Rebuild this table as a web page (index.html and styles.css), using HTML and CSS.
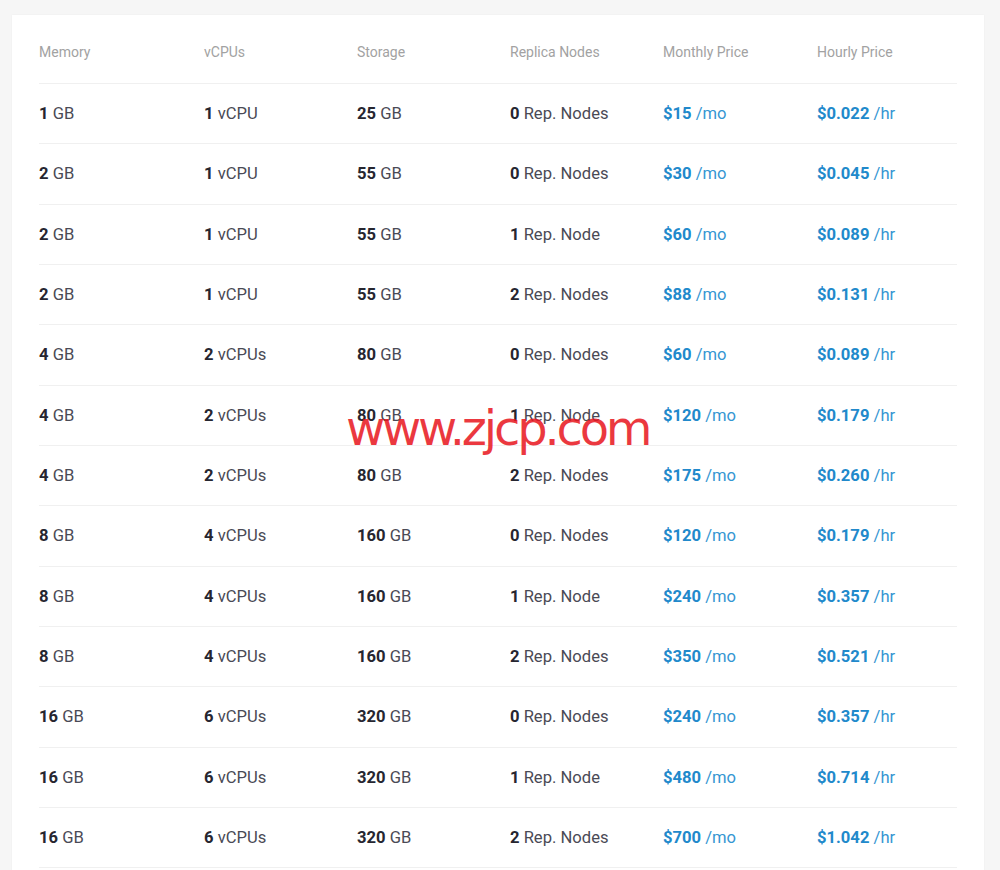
FILE: index.html
```html
<!DOCTYPE html>
<html lang="en">

<head>
    <meta charset="UTF-8">
    <title>Pricing</title>
    <link rel="stylesheet" href="styles.css">
</head>

<body>
    <div class="card">
        <div class="row head">
            <span>Memory</span>
            <span>vCPUs</span>
            <span>Storage</span>
            <span>Replica Nodes</span>
            <span>Monthly Price</span>
            <span>Hourly Price</span>
        </div>
        <div class="row">
            <span><b>1</b> GB</span><span><b>1</b> vCPU</span><span><b>25</b> GB</span><span><b>0</b> Rep. Nodes</span>
            <span class="price"><b>$15</b> /mo</span><span class="price"><b>$0.022</b> /hr</span>
        </div>
        <div class="row">
            <span><b>2</b> GB</span><span><b>1</b> vCPU</span><span><b>55</b> GB</span><span><b>0</b> Rep. Nodes</span>
            <span class="price"><b>$30</b> /mo</span><span class="price"><b>$0.045</b> /hr</span>
        </div>
        <div class="row">
            <span><b>2</b> GB</span><span><b>1</b> vCPU</span><span><b>55</b> GB</span><span><b>1</b> Rep. Node</span>
            <span class="price"><b>$60</b> /mo</span><span class="price"><b>$0.089</b> /hr</span>
        </div>
        <div class="row">
            <span><b>2</b> GB</span><span><b>1</b> vCPU</span><span><b>55</b> GB</span><span><b>2</b> Rep. Nodes</span>
            <span class="price"><b>$88</b> /mo</span><span class="price"><b>$0.131</b> /hr</span>
        </div>
        <div class="row">
            <span><b>4</b> GB</span><span><b>2</b> vCPUs</span><span><b>80</b> GB</span><span><b>0</b> Rep. Nodes</span>
            <span class="price"><b>$60</b> /mo</span><span class="price"><b>$0.089</b> /hr</span>
        </div>
        <div class="row">
            <span><b>4</b> GB</span><span><b>2</b> vCPUs</span><span><b>80</b> GB</span><span><b>1</b> Rep. Node</span>
            <span class="price"><b>$120</b> /mo</span><span class="price"><b>$0.179</b> /hr</span>
        </div>
        <div class="row">
            <span><b>4</b> GB</span><span><b>2</b> vCPUs</span><span><b>80</b> GB</span><span><b>2</b> Rep. Nodes</span>
            <span class="price"><b>$175</b> /mo</span><span class="price"><b>$0.260</b> /hr</span>
        </div>
        <div class="row">
            <span><b>8</b> GB</span><span><b>4</b> vCPUs</span><span><b>160</b> GB</span><span><b>0</b> Rep. Nodes</span>
            <span class="price"><b>$120</b> /mo</span><span class="price"><b>$0.179</b> /hr</span>
        </div>
        <div class="row">
            <span><b>8</b> GB</span><span><b>4</b> vCPUs</span><span><b>160</b> GB</span><span><b>1</b> Rep. Node</span>
            <span class="price"><b>$240</b> /mo</span><span class="price"><b>$0.357</b> /hr</span>
        </div>
        <div class="row">
            <span><b>8</b> GB</span><span><b>4</b> vCPUs</span><span><b>160</b> GB</span><span><b>2</b> Rep. Nodes</span>
            <span class="price"><b>$350</b> /mo</span><span class="price"><b>$0.521</b> /hr</span>
        </div>
        <div class="row">
            <span><b>16</b> GB</span><span><b>6</b> vCPUs</span><span><b>320</b> GB</span><span><b>0</b> Rep. Nodes</span>
            <span class="price"><b>$240</b> /mo</span><span class="price"><b>$0.357</b> /hr</span>
        </div>
        <div class="row">
            <span><b>16</b> GB</span><span><b>6</b> vCPUs</span><span><b>320</b> GB</span><span><b>1</b> Rep. Node</span>
            <span class="price"><b>$480</b> /mo</span><span class="price"><b>$0.714</b> /hr</span>
        </div>
        <div class="row">
            <span><b>16</b> GB</span><span><b>6</b> vCPUs</span><span><b>320</b> GB</span><span><b>2</b> Rep. Nodes</span>
            <span class="price"><b>$700</b> /mo</span><span class="price"><b>$1.042</b> /hr</span>
        </div>
    </div>
    <div class="watermark">www.zjcp.com</div>
</body>

</html>
```

FILE: styles.css
```css
body {
    margin: 0;
    background-color: #f6f6f6;
    font-family: Roboto, 'Liberation Sans', Arial, sans-serif;
    color: #4a4a55;
    height: 870px;
    overflow: hidden;
}

.card {
    margin: 15px 16px 0 12px;
    padding: 0 27px 40px;
    background-color: #fff;
    box-shadow: 0 0 2px rgba(0, 0, 0, 0.04);
}

.row {
    display: grid;
    grid-template-columns: 165px 153px 153px 153px 154px 1fr;
    align-items: center;
    height: 60.33px;
    box-sizing: border-box;
    border-bottom: 1px solid #f0f0f0;
    font-size: 16.6px;
}

.row b {
    font-weight: 700;
    color: #262630;
}

.row.head {
    height: 69px;
    padding-top: 6px;
    font-size: 14px;
    color: #a2a2a2;
}

.row .price {
    color: #3596d2;
}

.row .price b {
    color: #2189cb;
}

.watermark {
    position: absolute;
    left: 346px;
    top: 400px;
    font-family: 'DejaVu Sans', sans-serif;
    font-size: 48px;
    letter-spacing: -3.2px;
    color: rgba(232, 20, 28, 0.85);
}
```
